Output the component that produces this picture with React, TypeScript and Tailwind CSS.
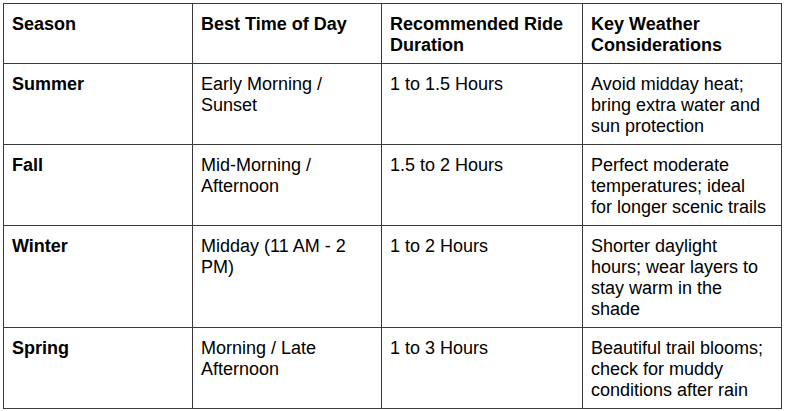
import React from 'react';

const rows = [
    ['Summer', 'Early Morning / Sunset', '1 to 1.5 Hours', 'Avoid midday heat; bring extra water and sun protection'],
    ['Fall', 'Mid-Morning / Afternoon', '1.5 to 2 Hours', 'Perfect moderate temperatures; ideal for longer scenic trails'],
    ['Winter', 'Midday (11 AM - 2 PM)', '1 to 2 Hours', 'Shorter daylight hours; wear layers to stay warm in the shade'],
    ['Spring', 'Morning / Late Afternoon', '1 to 3 Hours', 'Beautiful trail blooms; check for muddy conditions after rain'],
];

const headers = ['Season', 'Best Time of Day', 'Recommended Ride Duration', 'Key Weather Considerations'];

export default function App() {
    const cell = 'border border-[#3a3a3a] align-top pl-2 pr-3 pt-[10px] pb-[7px]';

    return (
        <div className="w-[786px] h-[411px] bg-white pt-[3px] pl-[3px] font-['Liberation_Sans',Arial,sans-serif] text-[18px] leading-[21px] text-black">
            <table className="table-fixed border-collapse w-[778px]">
                <colgroup>
                    <col className="w-[189px]" />
                    <col className="w-[189px]" />
                    <col className="w-[201px]" />
                    <col className="w-[199px]" />
                </colgroup>
                <thead>
                    <tr>
                        {headers.map((h) => (
                            <th key={h} className={`${cell} text-left font-bold`}>
                                {h}
                            </th>
                        ))}
                    </tr>
                </thead>
                <tbody>
                    {rows.map((r) => (
                        <tr key={r[0]}>
                            <td className={`${cell} font-bold`}>{r[0]}</td>
                            <td className={cell}>{r[1]}</td>
                            <td className={cell}>{r[2]}</td>
                            <td className={cell}>{r[3]}</td>
                        </tr>
                    ))}
                </tbody>
            </table>
        </div>
    );
}
